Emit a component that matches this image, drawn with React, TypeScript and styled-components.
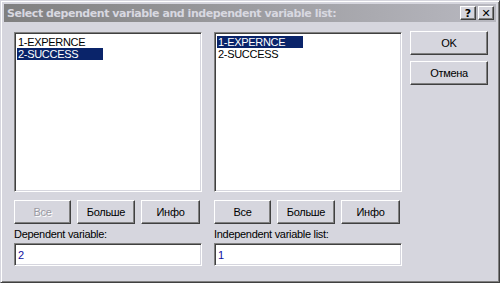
import React from 'react';
import styled, { createGlobalStyle } from 'styled-components';

const Global = createGlobalStyle`
  html, body {
    margin: 0;
    padding: 0;
    background: #ffffff;
  }
  body {
    font-family: "Liberation Sans", Arial, sans-serif;
    font-size: 11px;
    letter-spacing: -0.3px;
  }
`;

const Window = styled.div`
  width: 500px;
  height: 283px;
  box-sizing: border-box;
  background: #d6d6de;
  border-top: 1px solid #d6d6de;
  border-left: 1px solid #d6d6de;
  border-right: 1px solid #404040;
  border-bottom: 1px solid #404040;
  box-shadow: inset 1px 1px 0 #ffffff, inset -1px -1px 0 #808080;
  padding: 3px 3px 0 3px;
  display: flex;
  flex-direction: column;
`;

const TitleBar = styled.div`
  height: 18px;
  display: flex;
  align-items: center;
  padding: 0 2px 0 3px;
  background: linear-gradient(to right, #808080, #b8b8c0);
`;

const TitleText = styled.span`
  flex: 1;
  color: #d8d8e0;
  font-family: "DejaVu Sans", sans-serif;
  font-weight: bold;
  font-size: 11px;
  letter-spacing: -0.45px;
  white-space: nowrap;
`;

const CaptionButton = styled.div<{ $gap?: number }>`
  width: 16px;
  height: 14px;
  box-sizing: border-box;
  background: #d6d6de;
  border-top: 1px solid #ffffff;
  border-left: 1px solid #ffffff;
  border-right: 1px solid #404040;
  border-bottom: 1px solid #404040;
  box-shadow: inset -1px -1px 0 #808080;
  display: flex;
  align-items: center;
  justify-content: center;
  margin-left: ${(p) => p.$gap ?? 0}px;
  font-family: "DejaVu Sans", sans-serif;
  font-weight: bold;
  font-size: 11px;
  letter-spacing: 0;
  color: #000;
`;

const Body = styled.div`
  display: flex;
  padding: 10px 0 0 10px;
  gap: 12px;
`;

const Column = styled.div`
  width: 188px;
  display: flex;
  flex-direction: column;
`;

const ListBox = styled.div`
  height: 160px;
  box-sizing: border-box;
  background: #ffffff;
  border-top: 1px solid #808080;
  border-left: 1px solid #808080;
  border-right: 1px solid #ffffff;
  border-bottom: 1px solid #ffffff;
  box-shadow: inset 1px 1px 0 #404040, inset -1px -1px 0 #d6d6de;
  padding: 3px 2px 2px;
`;

const ListItem = styled.div<{ $selected?: boolean }>`
  display: inline-block;
  width: 85px;
  height: 12px;
  line-height: 12px;
  padding-left: 1px;
  color: ${(p) => (p.$selected ? '#ffffff' : '#000000')};
  background: ${(p) => (p.$selected ? '#0a246a' : 'transparent')};
`;

const ButtonRow = styled.div`
  display: flex;
  gap: 6px;
  margin-top: 8px;
`;

const Button = styled.div<{ $w: number; $disabled?: boolean }>`
  width: ${(p) => p.$w}px;
  height: 24px;
  box-sizing: border-box;
  background: #d6d6de;
  border-top: 1px solid #ffffff;
  border-left: 1px solid #ffffff;
  border-right: 1px solid #404040;
  border-bottom: 1px solid #404040;
  box-shadow: inset -1px -1px 0 #808080;
  display: flex;
  align-items: center;
  justify-content: center;
  color: ${(p) => (p.$disabled ? '#9a9aa2' : '#000000')};
  text-shadow: ${(p) => (p.$disabled ? '1px 1px 0 #ffffff' : 'none')};
`;

const Label = styled.div`
  margin-top: 3px;
  height: 14px;
  line-height: 14px;
  color: #000;
`;

const Field = styled.div`
  margin-top: 2px;
  height: 23px;
  box-sizing: border-box;
  background: #ffffff;
  border-top: 1px solid #808080;
  border-left: 1px solid #808080;
  border-right: 1px solid #ffffff;
  border-bottom: 1px solid #ffffff;
  box-shadow: inset 1px 1px 0 #404040, inset -1px -1px 0 #d6d6de;
  padding: 4px 3px;
  color: #1010a0;
  line-height: 14px;
`;

const Side = styled.div`
  display: flex;
  flex-direction: column;
  gap: 6px;
  margin-left: -4px;
  margin-top: -1px;
`;

const items = ['1-EXPERNCE', '2-SUCCESS'];

type PanelProps = {
  selected: number;
  allDisabled?: boolean;
  label: string;
  value: string;
};

const Panel = (props: PanelProps) => (
  <Column>
    <ListBox>
      {items.map((it, i) => (
        <div key={it}>
          <ListItem $selected={i === props.selected}>{it}</ListItem>
        </div>
      ))}
    </ListBox>
    <ButtonRow>
      <Button $w={57} $disabled={props.allDisabled}>Все</Button>
      <Button $w={58}>Больше</Button>
      <Button $w={59}>Инфо</Button>
    </ButtonRow>
    <Label>{props.label}</Label>
    <Field>{props.value}</Field>
  </Column>
);

export default function App() {
  return (
    <>
      <Global />
      <Window>
        <TitleBar>
          <TitleText>Select dependent variable and independent variable list:</TitleText>
          <CaptionButton>?</CaptionButton>
          <CaptionButton $gap={2}>✕</CaptionButton>
        </TitleBar>
        <Body>
          <Panel selected={1} allDisabled label="Dependent variable:" value="2" />
          <Panel selected={0} label="Independent variable list:" value="1" />
          <Side>
            <Button $w={78}>OK</Button>
            <Button $w={78}>Отмена</Button>
          </Side>
        </Body>
      </Window>
    </>
  );
}
